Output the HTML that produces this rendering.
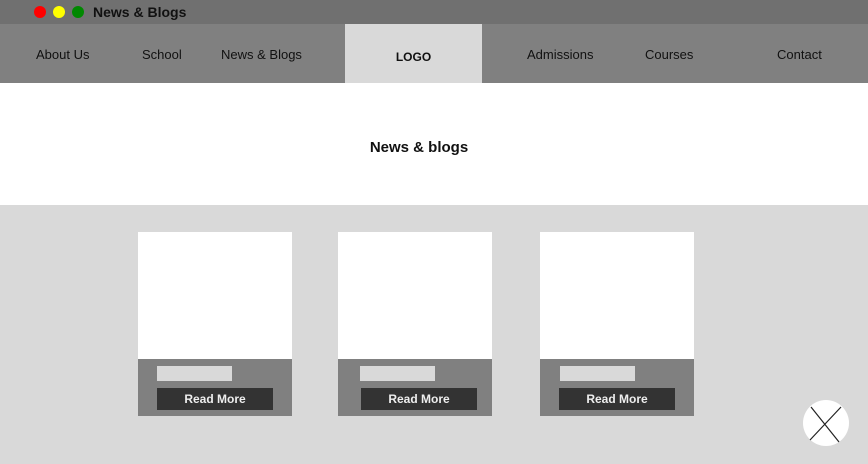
<!DOCTYPE html>
<html><head><style>
*{margin:0;padding:0;box-sizing:border-box}
body{width:868px;height:464px;position:relative;overflow:hidden;background:#d9d9d9;font-family:"Liberation Sans",sans-serif}
.a{position:absolute}
.nav{font-size:13px;color:#111;top:47px}
.card{position:absolute;top:232px;width:154px;height:184px;background:#fff}
.card .f{position:absolute;left:0;top:127px;width:154px;height:57px;background:#808080}
.lab{position:absolute;top:134px;width:75px;height:15px;background:#d9d9d9}
.btn{position:absolute;top:156px;width:116px;height:22px;background:#333;color:#eee;font-weight:bold;font-size:12px;text-align:center;line-height:22px}
</style></head><body>
<div class="a" style="left:0;top:0;width:868px;height:24px;background:#707070"></div>
<div class="a" style="left:34px;top:6px;width:12px;height:12px;border-radius:50%;background:#f00"></div>
<div class="a" style="left:53px;top:6px;width:12px;height:12px;border-radius:50%;background:#ff0"></div>
<div class="a" style="left:72px;top:6px;width:12px;height:12px;border-radius:50%;background:#080"></div>
<div class="a" style="left:93px;top:4px;font-size:14px;font-weight:bold;color:#111">News &amp; Blogs</div>
<div class="a" style="left:0;top:24px;width:868px;height:59px;background:#808080"></div>
<div class="a" style="left:345px;top:24px;width:137px;height:59px;background:#d9d9d9;text-align:center;line-height:66px;font-weight:bold;font-size:12px;color:#111">LOGO</div>
<div class="a nav" style="left:36px">About Us</div>
<div class="a nav" style="left:142px">School</div>
<div class="a nav" style="left:221px">News &amp; Blogs</div>
<div class="a nav" style="left:527px">Admissions</div>
<div class="a nav" style="left:645px">Courses</div>
<div class="a nav" style="left:777px">Contact</div>
<div class="a" style="left:0;top:83px;width:868px;height:122px;background:#fff"></div>
<div class="a" style="left:0;top:139px;width:838px;text-align:center;font-weight:bold;font-size:15px;color:#111">News &amp; blogs</div>
<div class="card" style="left:138px"><div class="f"></div><div class="lab" style="left:19px"></div><div class="btn" style="left:19px">Read More</div></div>
<div class="card" style="left:338px"><div class="f"></div><div class="lab" style="left:22px"></div><div class="btn" style="left:23px">Read More</div></div>
<div class="card" style="left:540px"><div class="f"></div><div class="lab" style="left:20px"></div><div class="btn" style="left:19px">Read More</div></div>
<svg class="a" style="left:780px;top:390px" width="88" height="74"><circle cx="46" cy="33" r="23" fill="#fff"/><path d="M31 17 L59 52 M61 17 L30 50" stroke="#222" stroke-width="1.2"/></svg>
</body></html>
